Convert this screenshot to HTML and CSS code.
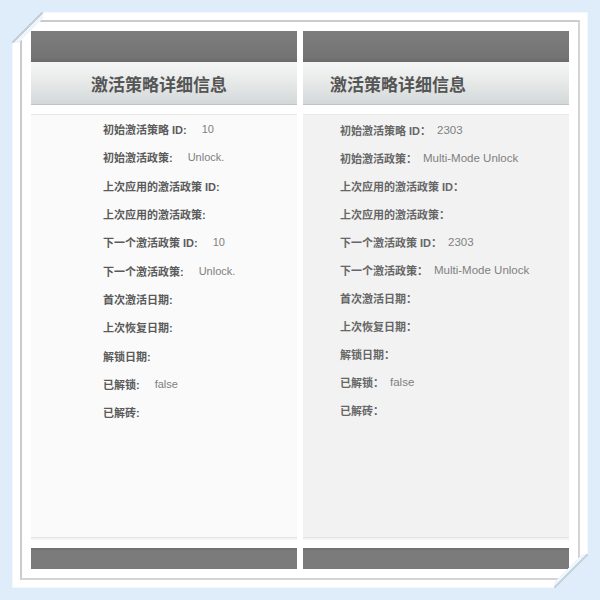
FILE: index.html
```html
<!DOCTYPE html>
<html lang="zh-CN">
<head>
  <meta charset="UTF-8">
  <title>激活策略详细信息</title>
  <meta name="viewport" content="width=device-width, initial-scale=1.0">
  <link rel="stylesheet" href="styles.css">
</head>
<body>
  <div class="photo">
    <div class="frame">
      <!-- Left: older version -->
      <div class="panel panel-old">
        <div class="topbar"></div>
        <div class="head"><h2>激活策略详细信息</h2></div>
        <div class="spacer"></div>
        <div class="body">
          <div class="row"><span class="label">初始激活策略 ID:</span><span class="value">10</span></div>
          <div class="row"><span class="label">初始激活政策:</span><span class="value">Unlock.</span></div>
          <div class="row"><span class="label">上次应用的激活政策 ID:</span></div>
          <div class="row"><span class="label">上次应用的激活政策:</span></div>
          <div class="row"><span class="label">下一个激活政策 ID:</span><span class="value">10</span></div>
          <div class="row"><span class="label">下一个激活政策:</span><span class="value">Unlock.</span></div>
          <div class="row"><span class="label">首次激活日期:</span></div>
          <div class="row"><span class="label">上次恢复日期:</span></div>
          <div class="row"><span class="label">解锁日期:</span></div>
          <div class="row"><span class="label">已解锁:</span><span class="value">false</span></div>
          <div class="row"><span class="label">已解砖:</span></div>
        </div>
        <div class="foot-gap"></div>
        <div class="bottombar"></div>
      </div>

      <!-- Right: newer version -->
      <div class="panel panel-new">
        <div class="topbar"></div>
        <div class="head"><h2>激活策略详细信息</h2></div>
        <div class="spacer"></div>
        <div class="body">
          <div class="row"><span class="label">初始激活策略 ID：</span><span class="value">2303</span></div>
          <div class="row"><span class="label">初始激活政策：</span><span class="value">Multi-Mode Unlock</span></div>
          <div class="row"><span class="label">上次应用的激活政策 ID：</span></div>
          <div class="row"><span class="label">上次应用的激活政策：</span></div>
          <div class="row"><span class="label">下一个激活政策 ID：</span><span class="value">2303</span></div>
          <div class="row"><span class="label">下一个激活政策：</span><span class="value">Multi-Mode Unlock</span></div>
          <div class="row"><span class="label">首次激活日期：</span></div>
          <div class="row"><span class="label">上次恢复日期：</span></div>
          <div class="row"><span class="label">解锁日期：</span></div>
          <div class="row"><span class="label">已解锁：</span><span class="value">false</span></div>
          <div class="row"><span class="label">已解砖：</span></div>
        </div>
        <div class="foot-gap"></div>
        <div class="bottombar"></div>
      </div>
    </div>
  </div>
</body>
</html>
```

FILE: styles.css
```css
* {
  box-sizing: border-box;
  font-family: "Liberation Sans", "Noto Sans CJK SC", sans-serif;
}

body {
  margin: 0;
  width: 600px;
  height: 600px;
  background: #deedf9;
  padding: 12px;
}

.photo {
  position: relative;
  height: 576px;
  background: #fff;
  border: 1px solid #f2f8fd;
  padding: 7px;
}

/* folded paper corners */
.photo::before,
.photo::after {
  content: "";
  position: absolute;
  width: 31px;
  height: 31px;
}

.photo::before {
  top: -1px;
  left: -1px;
  background: linear-gradient(135deg, #deedf9 0 48%, #c2ced8 48% 53%, #eef5fb 53% 60%, transparent 60%);
}

.photo::after {
  right: -1px;
  bottom: -1px;
  width: 34px;
  height: 34px;
  background: linear-gradient(315deg, #deedf9 0 48%, #c6d2dc 48% 52%, #eef5fb 52% 58%, transparent 58%);
}

.frame {
  height: 100%;
  border: 2px solid #cbcbcb;
  border-right-color: #d4d4d4;
  border-bottom-color: #d4d4d4;
  padding: 9px;
  display: flex;
  gap: 6px;
  background: #fff;
}

.panel {
  flex: 1;
  display: flex;
  flex-direction: column;
}

.topbar {
  height: 31px;
  background: linear-gradient(#7d7d7d, #747474 85%, #6a6a6a);
}

.head {
  height: 43px;
  background: linear-gradient(#f6f6f6, #e5e7e7 55%, #d3d8d8);
  border-bottom: 1px solid #bfc4c4;
  display: flex;
  align-items: center;
}

.head h2 {
  margin: 0;
  font-size: 17px;
  font-weight: bold;
  color: #555;
  font-family: "Noto Sans CJK SC", sans-serif;
}

.panel-old .head {
  justify-content: center;
  padding-right: 10px;
}

.panel-new .head {
  padding-left: 27px;
}

.spacer {
  height: 10px;
  background: #fff;
  border-bottom: 1px solid #e8e8e8;
}

.body {
  flex: 1;
  border-bottom: 1px solid #e2e2e2;
}

.panel-old .body {
  background: #fafafa;
  padding-left: 72px;
}

.panel-new .body {
  background: #f2f2f2;
  padding-left: 37px;
  padding-top: 1px;
}

.row {
  display: flex;
  align-items: center;
  height: 28.3px;
  font-size: 11px;
}

.panel-new .row {
  height: 28px;
}

.label {
  font-weight: bold;
  color: #5a5a5a;
}

.panel-new .label {
  color: #666;
}

.value {
  color: #808080;
  margin-left: 15px;
}

.panel-new .value {
  margin-left: 6px;
  font-size: 11.5px;
}

.foot-gap {
  height: 10px;
  background: #fff;
  border-top: 2px solid #f4f4f4;
}

.bottombar {
  height: 21px;
  background: linear-gradient(#6e6e6e, #7b7b7b 15%, #7b7b7b);
}
```
